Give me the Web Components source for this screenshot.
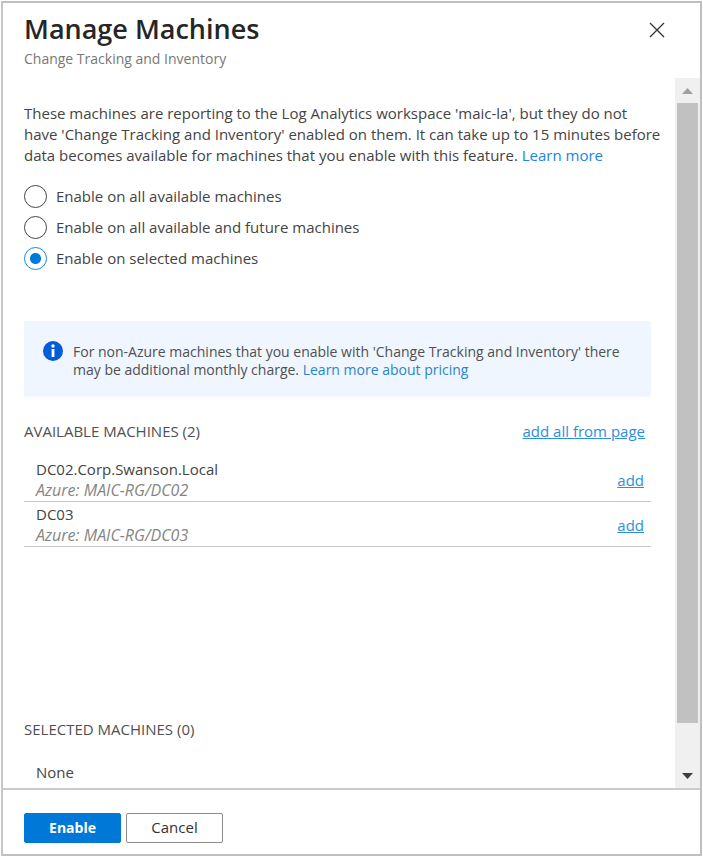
<!DOCTYPE html>
<html lang="en">
<head>
<meta charset="utf-8">
<title>Manage Machines</title>
<style>
  body { margin: 0; padding: 1px; background: #fff; color: #444; font: 15px/21px "Open Sans", "Noto Sans", sans-serif; }
</style>
</head>
<body>
<manage-panel>
  <panel-header slot="header" heading="Manage Machines">Change Tracking and Inventory</panel-header>
  <intro-text>These machines are reporting to the Log Analytics workspace 'maic-la', but they do not<br>have 'Change Tracking and Inventory' enabled on them. It can take up to 15 minutes before<br>data becomes available for machines that you enable with this feature.</intro-text>
  <enable-options></enable-options>
  <info-banner>For non-Azure machines that you enable with 'Change Tracking and Inventory' there<br>may be additional monthly charge.</info-banner>
  <machine-list heading="AVAILABLE MACHINES (2)" action="add all from page">
    <machine-row name="DC02.Corp.Swanson.Local">Azure: MAIC-RG/DC02</machine-row>
    <machine-row name="DC03">Azure: MAIC-RG/DC03</machine-row>
  </machine-list>
  <machine-list heading="SELECTED MACHINES (0)"><empty-row>None</empty-row></machine-list>
  <scroll-rail slot="rail"></scroll-rail>
  <panel-footer slot="footer"></panel-footer>
</manage-panel>

<script>
const define = (name, render) => customElements.define(name, class extends HTMLElement {
  constructor() {
    super();
    this.attachShadow({ mode: "open" });
  }
  connectedCallback() {
    this.shadowRoot.innerHTML = render(this);
  }
});

define("manage-panel", () => `
  <style>
    :host { display: flex; flex-direction: column; box-sizing: border-box; min-height: calc(100vh - 2px); border: 2px solid #bfbfbf; border-left-color: #c6c6c6; background: #fff; }
    .body { display: flex; flex: 1; border-bottom: 2px solid #cbcbcb; }
    main { display: flex; flex-direction: column; flex: 1; min-width: 0; padding: 25px 24px 5px 21px; }
  </style>
  <slot name="header"></slot>
  <div class="body"><main><slot></slot></main><slot name="rail"></slot></div>
  <slot name="footer"></slot>`);

define("panel-header", el => `
  <style>
    :host { display: flex; justify-content: space-between; align-items: flex-start; padding: 7px 35px 9px 21px; }
    h1 { margin: 0; font-size: 27px; line-height: 38px; font-weight: 600; color: #262626; }
    p { margin: 0; font-size: 14px; line-height: 21px; color: #777; }
    button { margin-top: 12px; padding: 0; border: 0; background: none; display: flex; }
  </style>
  <div><h1>${el.getAttribute("heading")}</h1><p><slot></slot></p></div>
  <button type="button" aria-label="Close">
    <svg width="16" height="16" viewBox="0 0 16 16" fill="none" stroke="#333" stroke-width="1.3"><path d="M1 1L15 15M15 1L1 15"/></svg>
  </button>`);

define("intro-text", () => `
  <style>
    :host { display: block; margin-right: -16px; }
    p { margin: 0; }
    a { color: #1a86dc; text-decoration: none; }
  </style>
  <p><slot></slot> <a href="#learn">Learn more</a></p>`);

define("enable-options", () => `
  <style>
    :host { display: block; margin: 19px 0 51px; }
    fieldset { display: grid; gap: 8px; margin: 0; padding: 0; border: 0; }
    label { display: flex; align-items: center; gap: 9px; line-height: 23px; }
    input { appearance: none; flex: none; width: 23px; height: 23px; margin: 0; border: 1px solid #444; border-radius: 50%; background: #fff; }
    input:checked { border-color: #1a86dc; background: radial-gradient(circle, #0078d7 5px, #fff 6px); }
  </style>
  <fieldset aria-label="Machines to enable">
    <label><input type="radio" name="scope">Enable on all available machines</label>
    <label><input type="radio" name="scope">Enable on all available and future machines</label>
    <label><input type="radio" name="scope" checked>Enable on selected machines</label>
  </fieldset>`);

define("info-banner", () => `
  <style>
    :host { display: flex; gap: 10px; padding: 20px 19px 18px; border-radius: 2px; background: #eff6ff; font-size: 14px; line-height: 18px; color: #505050; }
    svg { flex: none; }
    p { margin: 2px 0 0; }
    a { color: #2b83cb; text-decoration: none; }
  </style>
  <svg width="20" height="20" viewBox="0 0 20 20"><circle cx="10" cy="10" r="10" fill="#015cda"/><circle cx="10" cy="5" r="1.7" fill="#fff"/><path d="M8.6 8h2.8v8H8.6z" fill="#fff"/></svg>
  <p><slot></slot> <a href="#pricing">Learn more about pricing</a></p>`);

define("machine-list", el => `
  <style>
    :host { display: block; }
    :host(:not(:last-of-type)) { min-height: 298px; padding-top: 24px; }
    header { display: flex; justify-content: space-between; padding-right: 6px; margin-bottom: 15px; }
    h2 { margin: 0; font-size: 15px; line-height: 21px; font-weight: 400; color: #505050; }
    a { color: #2b8fdd; }
  </style>
  <header><h2>${el.getAttribute("heading")}</h2>${el.hasAttribute("action") ? `<a href="#add-all">${el.getAttribute("action")}</a>` : ""}</header>
  <slot></slot>`);

define("machine-row", el => `
  <style>
    :host { display: flex; justify-content: space-between; align-items: center; padding: 2px 7px 0 12px; border-bottom: 1px solid #c8c8c8; }
    em { display: block; font-size: 16px; color: #858585; }
    a { color: #2b8fdd; }
  </style>
  <div>${el.getAttribute("name")}<em><slot></slot></em></div>
  <a href="#add">add</a>`);

define("empty-row", () => `
  <style>:host { display: block; margin-top: 22px; padding-left: 12px; }</style>
  <slot></slot>`);

define("scroll-rail", () => `
  <style>
    :host { display: flex; flex-direction: column; width: 25px; background: #f0f0f0; }
    button { display: flex; align-items: center; justify-content: center; height: 25px; padding: 0; border: 0; background: none; }
    .track { flex: 1; display: flex; flex-direction: column; padding: 0 2px; }
    .thumb { flex: 94; background: #c1c1c1; }
    .rest { flex: 6; }
  </style>
  <button type="button" aria-label="Scroll up"><svg width="11" height="6" viewBox="0 0 11 6"><path d="M0 6L5.5 0L11 6z" fill="#a0a0a0"/></svg></button>
  <div class="track"><div class="thumb"></div><div class="rest"></div></div>
  <button type="button" aria-label="Scroll down"><svg width="11" height="6" viewBox="0 0 11 6"><path d="M0 0H11L5.5 6z" fill="#404040"/></svg></button>`);

define("panel-footer", () => `
  <style>
    :host { display: flex; gap: 5px; padding: 23px 21px 11px; }
    button { box-sizing: border-box; width: 97px; height: 30px; padding: 0 0 2px; border: 1px solid #8c8c8c; border-radius: 2px; background: #fff; color: #333; font: inherit; }
    .primary { border-color: #0078d7; background: #0078d7; color: #fff; font-size: 14px; font-weight: 700; }
  </style>
  <button type="button" class="primary">Enable</button>
  <button type="button">Cancel</button>`);
</script>
</body>
</html>
